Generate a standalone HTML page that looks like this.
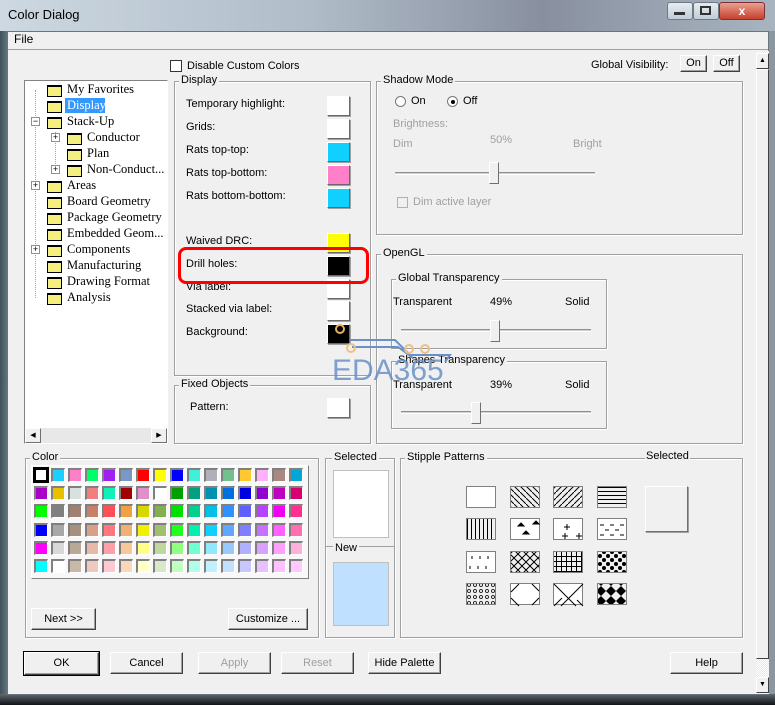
<!DOCTYPE html>
<html><head><meta charset="utf-8"><style>
*{box-sizing:border-box;margin:0;padding:0}
body{width:775px;height:705px;overflow:hidden;background:#f0f0f0;font-family:"Liberation Sans",sans-serif;font-size:11px;color:#000;position:relative}
.a{position:absolute}
.g{position:absolute;border:1px solid #a0a0a0;box-shadow:inset 1px 1px 0 #fff,1px 1px 0 #fff}
.gl{position:absolute;top:-8px;left:6px;background:#f0f0f0;padding:0 2px;font-size:11px}
.sw{position:absolute;width:23px;height:20px;border:1px solid #fff;border-right-color:#696969;border-bottom-color:#696969;box-shadow:1px 1px 0 #a0a0a0}
.t{position:absolute;white-space:nowrap}
.btn{position:absolute;height:22px;border:1px solid #fff;border-right-color:#404040;border-bottom-color:#404040;background:#f0f0f0;text-align:center;line-height:20px;font-size:11px;box-shadow:inset -1px -1px 0 #a0a0a0}
.dis{color:#a0a0a0}
.tree .t{font-family:"Liberation Serif",serif;font-size:12.5px}
.fd{position:absolute;width:15px;height:12px;background:#f4f080;border:1px solid #000;border-top-width:2px}
.pm{position:absolute;width:9px;height:9px;border:1px solid #909090;background:#fff;font-size:9px;line-height:7px;text-align:center}
.cg{position:absolute;left:34px;top:468px;display:grid;grid-template-columns:repeat(16,17px);grid-auto-rows:18.2px}
.cg i{display:block;width:14px;height:14px;border:2px solid #808080;border-right:1px solid #fff;border-bottom:1px solid #fff}
.sl{position:absolute;height:3px;border-top:1px solid #909090;border-bottom:1px solid #fff;background:#d0d0d0}
.th{position:absolute;width:10px;height:22px;background:#f0f0f0;border:1px solid #fff;border-right-color:#707070;border-bottom-color:#707070}
</style></head><body>
<!-- window frame -->
<div class="a" style="left:0;top:0;width:775px;height:705px;background:linear-gradient(90deg,#40505a,#8a9aa8 2%,#b8c4d0 50%,#8a96a0)"></div>
<div class="a" style="left:0;top:0;width:775px;height:31px;background:linear-gradient(90deg,#cdd8e2,#b0bcc8 40%,#8890a0 70%,#a8b4c0)"></div>
<div class="a" style="left:0;top:694px;width:775px;height:11px;background:linear-gradient(#606870,#101418)"></div>
<div class="t" style="left:8px;top:7px;font-size:13px">Color Dialog</div>
<div class="a" style="left:667px;top:2px;width:26px;height:18px;border:1px solid #707880;border-radius:3px;background:linear-gradient(#e6ecf2,#c0ccd8)"></div>
<div class="a" style="left:693px;top:2px;width:26px;height:18px;border:1px solid #707880;border-radius:3px;background:linear-gradient(#e6ecf2,#c0ccd8)"></div>
<div class="a" style="left:719px;top:2px;width:46px;height:18px;border:1px solid #803030;border-radius:3px;background:linear-gradient(#e8a090,#c84030);color:#fff;text-align:center;font-weight:bold;font-size:12px;line-height:16px">x</div>
<div class="a" style="left:674px;top:12px;width:11px;height:3px;background:#333"></div>
<div class="a" style="left:700px;top:6px;width:11px;height:9px;border:2px solid #333"></div>
<!-- client -->
<div class="a" style="left:7px;top:31px;width:762px;height:664px;background:#f0f0f0;border:1px solid #6a7480"></div>
<div class="a" style="left:8px;top:32px;width:760px;height:18px;background:#f0f0f0;border-bottom:1px solid #a0a0a0"></div>
<div class="t" style="left:14px;top:32px;font-size:12px">File</div>
<!-- scrollbar -->
<div class="a" style="left:756px;top:51px;width:13px;height:643px;background:repeating-conic-gradient(#fff 0 25%,#e8e8e8 0 50%) 0 0/2px 2px"></div>
<div class="a" style="left:756px;top:53px;width:13px;height:16px;background:#f0f0f0;border:1px solid #fff;border-right-color:#404040;border-bottom-color:#404040;font-size:7px;text-align:center;line-height:14px">▲</div>
<div class="a" style="left:756px;top:69px;width:13px;height:590px;background:#f0f0f0;border:1px solid #fff;border-right-color:#404040;border-bottom-color:#404040"></div>
<div class="a" style="left:756px;top:677px;width:13px;height:16px;background:#f0f0f0;border:1px solid #fff;border-right-color:#404040;border-bottom-color:#404040;font-size:7px;text-align:center;line-height:14px">▼</div>

<!-- top row -->
<div class="a" style="left:170px;top:60px;width:12px;height:12px;border:1px solid #333;background:#fff"></div>
<div class="t" style="left:187px;top:60px">Disable Custom Colors</div>
<div class="t" style="left:591px;top:59px">Global Visibility:</div>
<div class="btn" style="left:680px;top:55px;width:27px;height:17px;line-height:15px">On</div>
<div class="btn" style="left:713px;top:55px;width:27px;height:17px;line-height:15px">Off</div>

<!-- tree -->
<div class="a" style="left:24px;top:80px;width:144px;height:364px;background:#fff;border:1px solid #828282;border-right-color:#fff;border-bottom-color:#fff"></div>
<div class="a" style="left:25px;top:428px;width:142px;height:15px;background:#e8e8e8"></div>
<div class="a" style="left:25px;top:428px;width:16px;height:15px;background:#f0f0f0;border:1px solid #fff;border-right-color:#707070;border-bottom-color:#707070;font-size:7px;text-align:center;line-height:13px">◀</div>
<div class="a" style="left:151px;top:428px;width:16px;height:15px;background:#f0f0f0;border:1px solid #fff;border-right-color:#707070;border-bottom-color:#707070;font-size:7px;text-align:center;line-height:13px">▶</div>
<div class="a" style="left:35px;top:90px;width:1px;height:208px;border-left:1px dotted #a0a0a0"></div>
<div class="a" style="left:55px;top:132px;width:1px;height:40px;border-left:1px dotted #a0a0a0"></div>
<div class="tree">
<div class="fd" style="left:47px;top:85px"></div><div class="t" style="left:67px;top:82px">My Favorites</div>
<div class="fd" style="left:47px;top:101px"></div><div class="a" style="left:65px;top:98px;width:40px;height:15px;background:#3399ff"></div><div class="t" style="left:67px;top:98px;color:#fff">Display</div>
<div class="pm" style="left:31px;top:117px">−</div><div class="fd" style="left:47px;top:117px"></div><div class="t" style="left:67px;top:114px">Stack-Up</div>
<div class="pm" style="left:51px;top:133px">+</div><div class="fd" style="left:67px;top:133px"></div><div class="t" style="left:87px;top:130px">Conductor</div>
<div class="fd" style="left:67px;top:149px"></div><div class="t" style="left:87px;top:146px">Plan</div>
<div class="pm" style="left:51px;top:165px">+</div><div class="fd" style="left:67px;top:165px"></div><div class="t" style="left:87px;top:162px">Non-Conduct...</div>
<div class="pm" style="left:31px;top:181px">+</div><div class="fd" style="left:47px;top:181px"></div><div class="t" style="left:67px;top:178px">Areas</div>
<div class="fd" style="left:47px;top:197px"></div><div class="t" style="left:67px;top:194px">Board Geometry</div>
<div class="fd" style="left:47px;top:213px"></div><div class="t" style="left:67px;top:210px">Package Geometry</div>
<div class="fd" style="left:47px;top:229px"></div><div class="t" style="left:67px;top:226px">Embedded Geom...</div>
<div class="pm" style="left:31px;top:245px">+</div><div class="fd" style="left:47px;top:245px"></div><div class="t" style="left:67px;top:242px">Components</div>
<div class="fd" style="left:47px;top:261px"></div><div class="t" style="left:67px;top:258px">Manufacturing</div>
<div class="fd" style="left:47px;top:277px"></div><div class="t" style="left:67px;top:274px">Drawing Format</div>
<div class="fd" style="left:47px;top:293px"></div><div class="t" style="left:67px;top:290px">Analysis</div>
</div>

<!-- Display group -->
<div class="g" style="left:174px;top:81px;width:197px;height:295px"><span class="gl" style="left:4px">Display</span></div>
<div class="t" style="left:186px;top:98px">Temporary highlight:</div><div class="sw" style="left:327px;top:96px;background:#fff"></div>
<div class="t" style="left:186px;top:121px">Grids:</div><div class="sw" style="left:327px;top:119px;background:#fff"></div>
<div class="t" style="left:186px;top:144px">Rats top-top:</div><div class="sw" style="left:327px;top:142px;background:#10d0ff"></div>
<div class="t" style="left:186px;top:167px">Rats top-bottom:</div><div class="sw" style="left:327px;top:165px;background:#ff80c8"></div>
<div class="t" style="left:186px;top:190px">Rats bottom-bottom:</div><div class="sw" style="left:327px;top:188px;background:#10d0ff"></div>
<div class="t" style="left:186px;top:235px">Waived DRC:</div><div class="sw" style="left:327px;top:233px;background:#ffff00"></div>
<div class="t" style="left:186px;top:258px">Drill holes:</div><div class="sw" style="left:327px;top:256px;background:#000"></div>
<div class="t" style="left:186px;top:281px">Via label:</div><div class="sw" style="left:327px;top:279px;background:#fff"></div>
<div class="t" style="left:186px;top:303px">Stacked via label:</div><div class="sw" style="left:327px;top:301px;background:#fff"></div>
<div class="t" style="left:186px;top:326px">Background:</div><div class="sw" style="left:327px;top:324px;background:#000"></div>
<div class="a" style="left:178px;top:247px;width:191px;height:37px;border:3px solid #f00;border-radius:8px"></div>

<div class="g" style="left:174px;top:385px;width:197px;height:59px"><span class="gl" style="left:4px">Fixed Objects</span></div>
<div class="t" style="left:190px;top:401px">Pattern:</div><div class="sw" style="left:327px;top:398px;background:#fff"></div>

<!-- Shadow Mode -->
<div class="g" style="left:376px;top:81px;width:367px;height:154px"><span class="gl" style="left:4px">Shadow Mode</span></div>
<div class="a" style="left:395px;top:96px;width:11px;height:11px;border:1px solid #777;border-radius:50%;background:#fff"></div><div class="t" style="left:411px;top:95px">On</div>
<div class="a" style="left:447px;top:96px;width:11px;height:11px;border:1px solid #777;border-radius:50%;background:#fff"></div><div class="a" style="left:451px;top:100px;width:4px;height:4px;border-radius:50%;background:#000"></div><div class="t" style="left:463px;top:95px">Off</div>
<div class="t dis" style="left:393px;top:118px">Brightness:</div>
<div class="t dis" style="left:393px;top:138px">Dim</div>
<div class="t dis" style="left:490px;top:134px">50%</div>
<div class="t dis" style="left:573px;top:138px">Bright</div>
<div class="sl" style="left:395px;top:172px;width:200px"></div>
<div class="th" style="left:489px;top:162px"></div>
<div class="a" style="left:397px;top:197px;width:11px;height:11px;border:1px solid #b0b0b0"></div>
<div class="t dis" style="left:413px;top:196px">Dim active layer</div>

<!-- OpenGL -->
<div class="g" style="left:376px;top:254px;width:367px;height:190px"><span class="gl" style="left:4px">OpenGL</span></div>
<div class="g" style="left:391px;top:279px;width:216px;height:70px"><span class="gl" style="left:4px">Global Transparency</span></div>
<div class="t" style="left:393px;top:296px">Transparent</div><div class="t" style="left:490px;top:296px">49%</div><div class="t" style="left:565px;top:296px">Solid</div>
<div class="sl" style="left:401px;top:329px;width:190px"></div><div class="th" style="left:490px;top:320px"></div>
<div class="g" style="left:391px;top:361px;width:216px;height:68px"><span class="gl" style="left:4px">Shapes Transparency</span></div>
<div class="t" style="left:393px;top:379px">Transparent</div><div class="t" style="left:490px;top:379px">39%</div><div class="t" style="left:565px;top:379px">Solid</div>
<div class="sl" style="left:401px;top:411px;width:190px"></div><div class="th" style="left:471px;top:402px"></div>
<!-- watermark -->
<svg class="a" style="left:330px;top:320px" width="130" height="65"><path d="M20 20 H65 L80 35 H120 L115 42 M22 27 H68 L83 38" fill="none" stroke="#6a90c8" stroke-width="2"/><circle cx="10" cy="9" r="4" fill="none" stroke="#e8b060" stroke-width="2"/><circle cx="21" cy="28" r="4" fill="none" stroke="#f0c080" stroke-width="2"/><circle cx="79" cy="29" r="4" fill="none" stroke="#f0c080" stroke-width="2"/><circle cx="95" cy="29" r="4" fill="none" stroke="#f0c080" stroke-width="2"/><text x="2" y="60" font-family="Liberation Sans" font-size="30" fill="#6a90c8" fill-opacity=".85">EDA365</text></svg>

<!-- Color group -->
<div class="g" style="left:25px;top:458px;width:294px;height:180px"><span class="gl" style="left:4px">Color</span></div>
<div class="a" style="left:31px;top:465px;width:278px;height:114px;background:#f8f8f8;border:1px solid #fff;border-right-color:#808080;border-bottom-color:#808080"></div>
<div class="cg">
<i style="background:#fff;border:2px solid #000;outline:1px solid #000"></i><i style="background:#19d0ff"></i><i style="background:#ff80c8"></i><i style="background:#00ff66"></i><i style="background:#a020f0"></i><i style="background:#7898c8"></i><i style="background:#f00"></i><i style="background:#ff0"></i><i style="background:#00f"></i><i style="background:#40f0d8"></i><i style="background:#b0b0b8"></i><i style="background:#70c090"></i><i style="background:#ffc830"></i><i style="background:#ffb0ff"></i><i style="background:#a88880"></i><i style="background:#00a8d8"></i>
<i style="background:#a800c8"></i><i style="background:#e8c000"></i><i style="background:#d8e0e0"></i><i style="background:#f08080"></i><i style="background:#10f0b8"></i><i style="background:#a00000"></i><i style="background:#e090c8"></i><i style="background:#fff"></i><i style="background:#00a000"></i><i style="background:#00a080"></i><i style="background:#0090b0"></i><i style="background:#0070e0"></i><i style="background:#0000e0"></i><i style="background:#9000d0"></i><i style="background:#c000c0"></i><i style="background:#d80070"></i>
<i style="background:#0f0"></i><i style="background:#808080"></i><i style="background:#a08070"></i><i style="background:#c88068"></i><i style="background:#ff5058"></i><i style="background:#f0a040"></i><i style="background:#d8d800"></i><i style="background:#80b050"></i><i style="background:#00e000"></i><i style="background:#00d090"></i><i style="background:#00c0e8"></i><i style="background:#3090ff"></i><i style="background:#6060ff"></i><i style="background:#b840ff"></i><i style="background:#f000f0"></i><i style="background:#ff3090"></i>
<i style="background:#00f"></i><i style="background:#a8a8a8"></i><i style="background:#a89080"></i><i style="background:#d8a088"></i><i style="background:#ff7880"></i><i style="background:#f0b070"></i><i style="background:#f0f000"></i><i style="background:#a0c070"></i><i style="background:#20ff20"></i><i style="background:#00f0b0"></i><i style="background:#10d0ff"></i><i style="background:#60a8ff"></i><i style="background:#8080ff"></i><i style="background:#c870ff"></i><i style="background:#ff60ff"></i><i style="background:#ff70b0"></i>
<i style="background:#f0f"></i><i style="background:#d8d8d8"></i><i style="background:#b8a898"></i><i style="background:#e8b8a8"></i><i style="background:#ffa0a8"></i><i style="background:#f8c898"></i><i style="background:#ffff88"></i><i style="background:#c0d8a0"></i><i style="background:#90ff80"></i><i style="background:#70ffd0"></i><i style="background:#90e8ff"></i><i style="background:#98c8ff"></i><i style="background:#b0b0ff"></i><i style="background:#d8a0ff"></i><i style="background:#ffa0ff"></i><i style="background:#ffb0d8"></i>
<i style="background:#0ff"></i><i style="background:#fff"></i><i style="background:#c8b8a8"></i><i style="background:#f0c8c0"></i><i style="background:#ffc8d0"></i><i style="background:#f8d8b8"></i><i style="background:#ffffc8"></i><i style="background:#d8e8c8"></i><i style="background:#c0ffc0"></i><i style="background:#b0ffe8"></i><i style="background:#c0f0ff"></i><i style="background:#c0e0ff"></i><i style="background:#c8c8ff"></i><i style="background:#e8c0ff"></i><i style="background:#ffc0ff"></i><i style="background:#ffc8ff"></i>
</div>
<div class="btn" style="left:31px;top:608px;width:65px">Next &gt;&gt;</div>
<div class="btn" style="left:228px;top:608px;width:80px">Customize ...</div>

<!-- Selected -->
<div class="g" style="left:325px;top:458px;width:70px;height:180px"><span class="gl" style="left:6px">Selected</span></div>
<div class="a" style="left:333px;top:470px;width:56px;height:68px;background:#fff;border:1px solid #c0c0c0"></div>
<div class="a" style="left:326px;top:546px;width:68px;height:1px;background:#a0a0a0"></div>
<div class="t" style="left:333px;top:542px;background:#f0f0f0;padding:0 2px">New</div>
<div class="a" style="left:333px;top:562px;width:56px;height:64px;background:#c0e0ff;border:1px solid #c0c0c0"></div>

<!-- Stipple -->
<div class="g" style="left:400px;top:458px;width:343px;height:180px"><span class="gl" style="left:4px">Stipple Patterns</span></div>
<div class="t" style="left:645px;top:450px;background:#f0f0f0;padding:0 1px">Selected</div>
<svg class="a" style="left:466px;top:486px" width="200" height="125">
<defs>
<pattern id="p1" width="6" height="6" patternUnits="userSpaceOnUse"><path d="M0 0L6 6" stroke="#000"/></pattern>
<pattern id="p2" width="6" height="6" patternUnits="userSpaceOnUse"><path d="M6 0L0 6" stroke="#000"/></pattern>
<pattern id="p3" width="4" height="4" patternUnits="userSpaceOnUse"><path d="M0 1.5H4" stroke="#000"/></pattern>
<pattern id="p4" width="4" height="4" patternUnits="userSpaceOnUse"><path d="M1.5 0V4" stroke="#000"/></pattern>
<pattern id="p5" width="8" height="8" patternUnits="userSpaceOnUse"><path d="M0 0L8 8M8 0L0 8" stroke="#000"/></pattern>
<pattern id="p6" width="5" height="5" patternUnits="userSpaceOnUse"><path d="M0 .5H5M.5 0V5" stroke="#000"/></pattern>
<pattern id="p7" width="8" height="8" patternUnits="userSpaceOnUse"><circle cx="2" cy="2" r="2"/><circle cx="6" cy="6" r="2"/></pattern>
<pattern id="p8" width="6" height="6" patternUnits="userSpaceOnUse"><circle cx="3" cy="3" r="1.5" fill="none" stroke="#000" stroke-width=".8"/></pattern>
<pattern id="p9" width="10" height="10" patternUnits="userSpaceOnUse"><path d="M5 0L10 5L5 10L0 5Z"/></pattern>
</defs>
<g stroke="#808080">
<rect x="0.5" y="0.5" width="29" height="21" fill="#fff"/>
<rect x="44.5" y="0.5" width="29" height="21" fill="url(#p1)"/>
<rect x="87.5" y="0.5" width="29" height="21" fill="url(#p2)"/>
<rect x="131.5" y="0.5" width="29" height="21" fill="url(#p3)"/>
<rect x="0.5" y="32.5" width="29" height="21" fill="url(#p4)"/>
<rect x="44.5" y="32.5" width="29" height="21" fill="#fff"/>
<rect x="87.5" y="32.5" width="29" height="21" fill="#fff"/>
<rect x="131.5" y="32.5" width="29" height="21" fill="#fff"/>
<rect x="0.5" y="65.5" width="29" height="21" fill="#fff"/>
<rect x="44.5" y="65.5" width="29" height="21" fill="url(#p5)"/>
<rect x="87.5" y="65.5" width="29" height="21" fill="url(#p6)"/>
<rect x="131.5" y="65.5" width="29" height="21" fill="url(#p7)"/>
<rect x="0.5" y="97.5" width="29" height="21" fill="url(#p8)"/>
<rect x="44.5" y="97.5" width="29" height="21" fill="#fff"/>
<rect x="87.5" y="97.5" width="29" height="21" fill="#fff"/>
<rect x="131.5" y="97.5" width="29" height="21" fill="url(#p9)"/>
</g>
<g fill="#000" stroke="#000">
<path d="M52 40l3-3 3 3zM67 38l3-3 3 3zM57 48l3-3 3 3z"/>
<path d="M101 38v6M98 41h6M96 50h6M99 47v6M110 50h6M113 47v6" fill="none"/>
<path d="M134 39h4M144 39h4M154 39h4M139 44h4M149 44h4M134 49h4M144 49h4M154 49h4" fill="none"/>
<path d="M6 70v3M14 70v3M22 70v3M4 80v3M12 80v3M20 80v3" fill="none"/>
<path d="M53 98l-8 8M45 112l8 8M66 98l7 7M73 112l-7 7" fill="none"/>
<path d="M88 98l22 22M117 98l-22 22M88 120l8-8M117 120l-6-6" fill="none"/>
</g>
</svg>
<div class="a" style="left:645px;top:486px;width:43px;height:46px;background:#f0f0f0;border:1px solid #fff;border-right-color:#707070;border-bottom-color:#707070;box-shadow:1px 1px 0 #a0a0a0"></div>

<!-- bottom buttons -->
<div class="btn" style="left:24px;top:652px;width:75px;height:23px;outline:1px solid #000">OK</div>
<div class="btn" style="left:110px;top:652px;width:73px">Cancel</div>
<div class="btn dis" style="left:198px;top:652px;width:73px">Apply</div>
<div class="btn dis" style="left:281px;top:652px;width:73px">Reset</div>
<div class="btn" style="left:368px;top:652px;width:73px">Hide Palette</div>
<div class="btn" style="left:670px;top:652px;width:73px">Help</div>
</body></html>
